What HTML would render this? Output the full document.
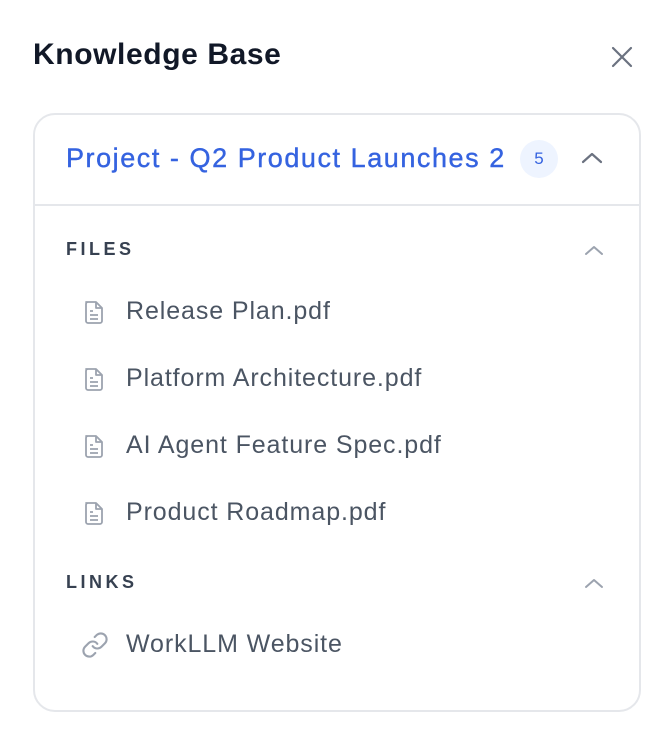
<!DOCTYPE html>
<html><head><style>
*{margin:0;padding:0;box-sizing:border-box}
body{width:670px;height:732px;background:#fff;font-family:"Liberation Sans",sans-serif;position:relative;overflow:hidden}
.a{position:absolute}
.t{left:33px;top:38px;font-size:30px;font-weight:bold;color:#111827;letter-spacing:0.6px}
.card{left:33px;top:113px;width:608px;height:599px;border:2px solid #e5e7eb;border-radius:22px}
.hr{left:33px;top:204px;width:608px;height:2px;background:#e5e7eb}
.p{left:66px;top:143px;font-size:27px;color:#3563e0;letter-spacing:1.55px;-webkit-text-stroke:0.4px #3563e0}
.badge{left:520px;top:140px;width:38px;height:38px;border-radius:50%;background:#eef4ff;color:#3563e0;font-size:17px;text-align:center;line-height:38px}
.sec{left:66px;font-size:18px;font-weight:bold;color:#374151;letter-spacing:3.5px}
.it{left:126px;font-size:25px;color:#4b5563;letter-spacing:0.9px}
.ic{left:82px}
</style></head><body>
<div class="a t">Knowledge Base</div>
<svg class="a" style="left:610px;top:45px" width="24" height="24" viewBox="0 0 24 24"><path d="M3 3L21 21M21 3L3 21" stroke="#6b7280" stroke-width="2.2" stroke-linecap="round"/></svg>
<div class="a card"></div>
<div class="a hr"></div>
<div class="a p">Project - Q2 Product Launches 2</div>
<div class="a badge">5</div>
<svg class="a" style="left:581px;top:151px" width="22" height="14" viewBox="0 0 22 14"><path d="M2 11L11 3L20 11" stroke="#6b7280" stroke-width="2.2" fill="none" stroke-linecap="round" stroke-linejoin="round"/></svg>
<div class="a sec" style="top:239px">FILES</div>
<svg class="a" style="left:584px;top:244px" width="20" height="12" viewBox="0 0 20 12"><path d="M2 10L10 3L18 10" stroke="#9ca3af" stroke-width="2" fill="none" stroke-linecap="round" stroke-linejoin="round"/></svg>
<svg class="a ic" style="top:299px" width="24" height="26" viewBox="0 0 24 26"><path d="M4 3h10l6 6v13a2 2 0 0 1-2 2H6a2 2 0 0 1-2-2V5a2 2 0 0 1 2-2zM14 3v6h6M8 12h3M8 16h8M8 20h8" stroke="#9ca3af" stroke-width="1.8" fill="none" stroke-linejoin="round"/></svg>
<div class="a it" style="top:297px">Release Plan.pdf</div>
<svg class="a ic" style="top:366px" width="24" height="26" viewBox="0 0 24 26"><path d="M4 3h10l6 6v13a2 2 0 0 1-2 2H6a2 2 0 0 1-2-2V5a2 2 0 0 1 2-2zM14 3v6h6M8 12h3M8 16h8M8 20h8" stroke="#9ca3af" stroke-width="1.8" fill="none" stroke-linejoin="round"/></svg>
<div class="a it" style="top:364px">Platform Architecture.pdf</div>
<svg class="a ic" style="top:433px" width="24" height="26" viewBox="0 0 24 26"><path d="M4 3h10l6 6v13a2 2 0 0 1-2 2H6a2 2 0 0 1-2-2V5a2 2 0 0 1 2-2zM14 3v6h6M8 12h3M8 16h8M8 20h8" stroke="#9ca3af" stroke-width="1.8" fill="none" stroke-linejoin="round"/></svg>
<div class="a it" style="top:431px">AI Agent Feature Spec.pdf</div>
<svg class="a ic" style="top:500px" width="24" height="26" viewBox="0 0 24 26"><path d="M4 3h10l6 6v13a2 2 0 0 1-2 2H6a2 2 0 0 1-2-2V5a2 2 0 0 1 2-2zM14 3v6h6M8 12h3M8 16h8M8 20h8" stroke="#9ca3af" stroke-width="1.8" fill="none" stroke-linejoin="round"/></svg>
<div class="a it" style="top:498px">Product Roadmap.pdf</div>
<div class="a sec" style="top:572px">LINKS</div>
<svg class="a" style="left:584px;top:577px" width="20" height="12" viewBox="0 0 20 12"><path d="M2 10L10 3L18 10" stroke="#9ca3af" stroke-width="2" fill="none" stroke-linecap="round" stroke-linejoin="round"/></svg>
<svg class="a" style="left:81px;top:631px" width="28" height="28" viewBox="0 0 24 24"><path d="M10 13a5 5 0 0 0 7.54.54l3-3a5 5 0 0 0-7.07-7.07l-1.72 1.71M14 11a5 5 0 0 0-7.54-.54l-3 3a5 5 0 0 0 7.07 7.07l1.71-1.71" stroke="#9ca3af" stroke-width="1.8" fill="none" stroke-linecap="round"/></svg>
<div class="a it" style="top:630px">WorkLLM Website</div>
</body></html>
